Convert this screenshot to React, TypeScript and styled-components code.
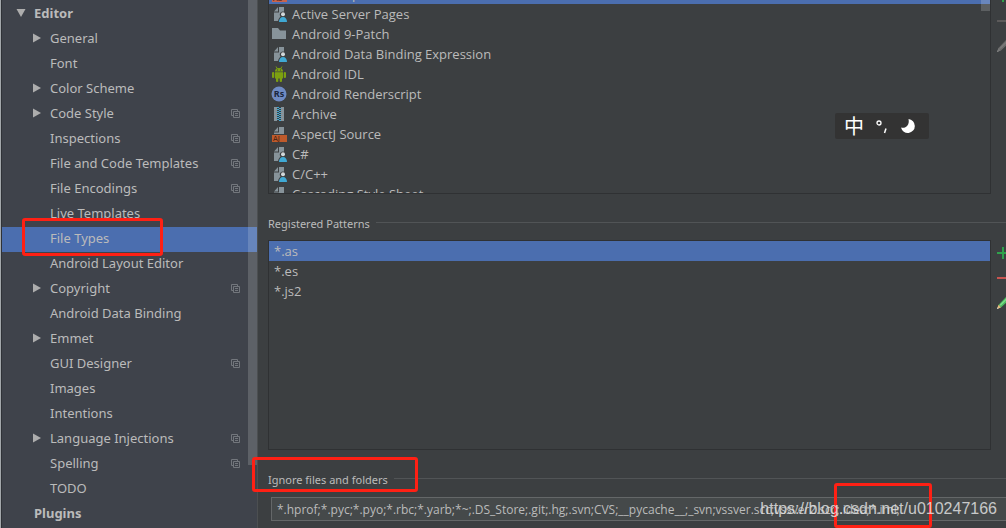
import React from "react";
import styled, { createGlobalStyle } from "styled-components";

const GlobalStyle = createGlobalStyle`
  * { box-sizing: border-box; }
  body { margin: 0; background: #3c3f41; }
  ul { list-style: none; margin: 0; padding: 0; }
  button, input { font: inherit; color: inherit; }
`;

const Window = styled.div`
  position: relative;
  display: flex;
  min-height: 100vh;
  overflow: hidden;
  background: #3c3f41;
  color: #bbbbbb;
  font-family: "Noto Sans", "Noto Sans CJK SC", sans-serif;
  font-size: 13px;
`;

const Sidebar = styled.nav`
  position: relative;
  flex: 0 0 258px;
  padding-top: 2px;
  background: #3f434b;
  border-left: 1px solid #a3a8ab;
  border-right: 1px solid #4c4f51;
  box-shadow: inset 1px 0 #2f3237;
`;

const TreeItem = styled.li`
  position: relative;
  padding-left: 1px;
`;

const TreeButton = styled.button<{ $root?: boolean; $selected?: boolean }>`
  display: flex;
  align-items: center;
  gap: 6px;
  width: 100%;
  height: 25px;
  padding: 0 17px 3px ${(p) => (p.$root ? 12 : 28)}px;
  border: 0;
  background: ${(p) => (p.$selected ? "#4b6eaf" : "transparent")};
  font-weight: ${(p) => (p.$root ? 700 : 400)};
  text-align: left;
  white-space: nowrap;
`;

const ArrowSlot = styled.span`
  display: flex;
  flex: 0 0 14px;
  justify-content: center;
`;

const TreeLabel = styled.span`
  flex: 1;
`;

const SideThumb = styled.div`
  position: absolute;
  top: 0;
  right: 0;
  width: 9px;
  height: 465px;
  background: rgba(255, 255, 255, 0.16);
`;

const Highlight = styled.div<{ $inset: string; $width: number }>`
  position: absolute;
  inset: ${(p) => p.$inset};
  z-index: 3;
  width: ${(p) => p.$width}px;
  border: 3px solid #ff2014;
  border-radius: 3px;
  pointer-events: none;
`;

const Main = styled.main`
  display: flex;
  flex: 1;
  flex-direction: column;
  min-width: 0;
  padding: 0 0 7px 10px;
`;

const Panel = styled.section<{ $grow?: boolean }>`
  display: flex;
  flex: ${(p) => (p.$grow ? "1 0 210px" : "0 0 194px")};
`;

const ListBox = styled.div<{ $cut?: boolean }>`
  position: relative;
  flex: 1;
  min-width: 0;
  height: ${(p) => (p.$cut ? "194px" : "auto")};
  overflow: hidden;
  border: 1px solid #2f3133;
  border-top-width: ${(p) => (p.$cut ? 0 : 1)}px;
  font-family: "Open Sans", sans-serif;
`;

const List = styled.ul<{ $scrolled?: boolean }>`
  margin-top: ${(p) => (p.$scrolled ? -16 : 0)}px;
`;

const ListRow = styled.li<{ $selected?: boolean; $plain?: boolean }>`
  display: flex;
  align-items: center;
  gap: 5px;
  height: 20px;
  padding-left: ${(p) => (p.$plain ? 5 : 2)}px;
  background: ${(p) => (p.$selected ? "#4b6eaf" : "transparent")};
  line-height: 20px;
  white-space: nowrap;
`;

const ListThumb = styled.div`
  position: absolute;
  top: 0;
  right: 0;
  width: 9px;
  height: 11px;
  background: rgba(255, 255, 255, 0.17);
`;

const Actions = styled.div<{ $scrolled?: boolean }>`
  flex: 0 0 15px;
  overflow: hidden;
  & > button:first-child {
    margin-top: ${(p) => (p.$scrolled ? -17 : 0)}px;
  }
`;

const ActionButton = styled.button`
  display: flex;
  align-items: center;
  height: 25px;
  padding: 0 0 0 4px;
  border: 0;
  background: transparent;
`;

const Heading = styled.div`
  position: relative;
  display: flex;
  align-items: center;
  gap: 6px;
  flex: 0 0 46px;
  padding-top: 14px;
  font-size: 11px;
  line-height: 18px;
  white-space: nowrap;
  &::after {
    content: "";
    flex: 1;
    height: 1px;
    margin-bottom: 4px;
    background: #515456;
  }
`;

const IgnoreRow = styled.div`
  position: relative;
  padding: 1px 0 0 3px;
`;

const IgnoreInput = styled.input`
  display: block;
  width: 100%;
  height: 24px;
  padding: 0 5px;
  border: 1px solid #646768;
  border-right: 0;
  background: #45494a;
  outline: 0;
  font-family: "Open Sans", sans-serif;
  font-size: 12px;
`;

const ImeBar = styled.div`
  position: absolute;
  top: 113px;
  right: 77px;
  display: flex;
  align-items: center;
  justify-content: space-between;
  width: 94px;
  height: 26px;
  padding: 0 13px 0 9px;
  border-radius: 2px;
  background: #333333;
  color: #ffffff;
  font-family: "Noto Sans CJK SC", sans-serif;
  font-size: 20px;
  line-height: 24px;
`;

const Watermark = styled.div`
  position: absolute;
  right: 9px;
  bottom: 9px;
  z-index: 4;
  color: rgba(225, 225, 225, 0.85);
  font-family: "Liberation Sans", sans-serif;
  font-size: 16px;
  line-height: 20px;
  pointer-events: none;
`;

const Arrow = ({ open }: { open?: boolean }) => (
  <svg width="10" height="10" viewBox="0 0 10 10" fill="#adadad" aria-hidden="true">
    {open ? <path d="M0.5 1h9L5 9z" /> : <path d="M1 0.5v9L9 5z" />}
  </svg>
);

const CopyIcon = () => (
  <svg width="9" height="9" viewBox="0 0 9 9" fill="none" stroke="#73777d" aria-hidden="true">
    <path d="M2 6.5H0.5v-6h6V2M2.5 2.5h6v6h-6zM4 4.5h3M4 6.5h3" />
  </svg>
);

type Kind = "banner-as" | "user" | "folder" | "android" | "rs" | "archive" | "banner-aj" | "css";

const GRAY = "#87939a";

const FileIcon = ({ kind }: { kind: Kind }) => (
  <svg width="16" height="16" viewBox="0 0 16 16" aria-hidden="true">
    {kind === "user" && (
      <>
        <path fill={GRAY} d="M3 5.5L7 1v4.500zM8 1h5v14H3V6.500h5z" />
        <path fill="#3c3f41" d="M12 5.500a3 3 0 0 1 2.500 5L16 13v3H7c0-2.500 1-4 2.500-5.500A3 3 0 0 1 12 5.500z" />
        <circle cx="12" cy="8.300" r="2" fill="#d3d8da" />
        <path fill="#40a9d4" d="M8 16c0-3 1.500-5 4-5s4 2 4 5z" />
      </>
    )}
    {kind === "folder" && <path fill={GRAY} d="M1 2h6l2 2.500h6V13H1z" />}
    {kind === "android" && (
      <g fill="#7ca010">
        <path d="M4 5.500C4 3.500 5.500 2 8 2s4 1.500 4 3.500z" />
        <path d="M5 0.500l1.500 2.500M11 0.500L9.500 3" stroke="#7ca010" />
        <path d="M4 6.200h8v6.300H4z" />
        <rect x="1" y="6" width="2.300" height="6" rx="1.100" />
        <rect x="12.700" y="6" width="2.300" height="6" rx="1.100" />
        <rect x="5" y="11" width="2.300" height="5" rx="1" />
        <rect x="8.700" y="11" width="2.300" height="5" rx="1" />
        <path fill="#3c3f41" d="M6 3.500h1v1H6zM9 3.500h1v1H9z" />
      </g>
    )}
    {kind === "rs" && (
      <>
        <circle cx="8" cy="8" r="7.500" fill="#6f8bc4" />
        <text x="8" y="11" textAnchor="middle" fontSize="9" fontWeight="700" fontFamily="Noto Sans, sans-serif" fill="#1c2740">Rs</text>
      </>
    )}
    {kind === "archive" && (
      <>
        <path fill={GRAY} d="M3 1h3v14H3zM10 1h3v14h-3z" />
        <path stroke="#40a9d4" strokeWidth="2" strokeDasharray="1 1" d="M7 1v14" />
        <path stroke="#40a9d4" strokeWidth="2" strokeDasharray="1 1" d="M9 2v13" />
      </>
    )}
    {(kind === "banner-as" || kind === "banner-aj" || kind === "css") && (
      <>
        <path fill={GRAY} d="M3 5.5L7 1v4.500zM8 1h5v7H3V6.500h5z" />
        <rect x="1" y="9" width="15" height="7" fill={kind === "banner-as" ? "#c9644d" : kind === "css" ? "#3e86a0" : "#bf5a2b"} />
        <text x="2" y="15" fontSize="7" fontFamily="DejaVu Sans, sans-serif" fill="#3a1a10">
          {kind === "banner-as" ? "AS" : kind === "css" ? "CSS" : "AJ"}
        </text>
      </>
    )}
  </svg>
);

const PlusIcon = () => (
  <svg width="16" height="16" viewBox="0 0 16 16" aria-hidden="true">
    <path d="M8 2v12M2 8h12" stroke="#2fa14b" strokeWidth="2" />
  </svg>
);

const MinusIcon = ({ disabled }: { disabled?: boolean }) => (
  <svg width="16" height="16" viewBox="0 0 16 16" aria-hidden="true">
    <path d="M2 8h12" stroke={disabled ? "#5c5a5a" : "#c75450"} strokeWidth="2" />
  </svg>
);

const PencilIcon = ({ disabled }: { disabled?: boolean }) => (
  <svg width="16" height="16" viewBox="0 0 16 16" aria-hidden="true">
    <path d="M3.500 10L11 2l3 3-8 7.500z" fill={disabled ? "#6b6b6b" : "#4fc063"} />
    <path d="M5 10.500L12.500 3" stroke={disabled ? "#858585" : "#a2eba8"} />
    <path d="M3.500 9.800L2 14l4-1.500z" fill={disabled ? "#777777" : "#e6bd7c"} />
    <path d="M2.600 12.300L2 14l1.700-.6z" fill={disabled ? "#8a8a8a" : "#d8d8d8"} />
  </svg>
);

const ActionColumn = ({ scrolled }: { scrolled?: boolean }) => (
  <Actions $scrolled={scrolled}>
    <ActionButton aria-label="Add"><PlusIcon /></ActionButton>
    <ActionButton aria-label="Remove"><MinusIcon disabled={scrolled} /></ActionButton>
    <ActionButton aria-label="Edit"><PencilIcon disabled={scrolled} /></ActionButton>
  </Actions>
);

interface Node {
  label: string;
  root?: boolean;
  arrow?: boolean;
  copy?: boolean;
  selected?: boolean;
}

const tree: Node[] = [
  { label: "Editor", root: true, arrow: true },
  { label: "General", arrow: true },
  { label: "Font" },
  { label: "Color Scheme", arrow: true },
  { label: "Code Style", arrow: true, copy: true },
  { label: "Inspections", copy: true },
  { label: "File and Code Templates", copy: true },
  { label: "File Encodings", copy: true },
  { label: "Live Templates" },
  { label: "File Types", selected: true },
  { label: "Android Layout Editor" },
  { label: "Copyright", arrow: true, copy: true },
  { label: "Android Data Binding" },
  { label: "Emmet", arrow: true },
  { label: "GUI Designer", copy: true },
  { label: "Images" },
  { label: "Intentions" },
  { label: "Language Injections", arrow: true, copy: true },
  { label: "Spelling", copy: true },
  { label: "TODO" },
  { label: "Plugins", root: true },
];

const fileTypes: { label: string; kind: Kind }[] = [
  { label: "ActionScript", kind: "banner-as" },
  { label: "Active Server Pages", kind: "user" },
  { label: "Android 9-Patch", kind: "folder" },
  { label: "Android Data Binding Expression", kind: "user" },
  { label: "Android IDL", kind: "android" },
  { label: "Android Renderscript", kind: "rs" },
  { label: "Archive", kind: "archive" },
  { label: "AspectJ Source", kind: "banner-aj" },
  { label: "C#", kind: "user" },
  { label: "C/C++", kind: "user" },
  { label: "Cascading Style Sheet", kind: "css" },
];

const patterns = ["*.as", "*.es", "*.js2"];

const ignored =
  "*.hprof;*.pyc;*.pyo;*.rbc;*.yarb;*~;.DS_Store;.git;.hg;.svn;CVS;__pycache__;_svn;vssver.scc;vssver2.scc;.idea;*.iml;";

export default function App() {
  return (
    <Window>
      <GlobalStyle />
      <Sidebar aria-label="Settings">
        <ul>
          {tree.map((n) => (
            <TreeItem key={n.label}>
              <TreeButton $root={n.root} $selected={n.selected}>
                <ArrowSlot>{n.arrow && <Arrow open={n.root} />}</ArrowSlot>
                <TreeLabel>{n.label}</TreeLabel>
                {n.copy && <CopyIcon />}
              </TreeButton>
              {n.selected && <Highlight $inset="-9px auto -4px 21px" $width={141} />}
            </TreeItem>
          ))}
        </ul>
        <SideThumb />
      </Sidebar>
      <Main>
        <Panel>
          <ListBox $cut>
            <List $scrolled>
              {fileTypes.map((f, i) => (
                <ListRow key={f.label} $selected={i === 0}>
                  <FileIcon kind={f.kind} />
                  <span>{f.label}</span>
                </ListRow>
              ))}
            </List>
            <ListThumb />
          </ListBox>
          <ActionColumn scrolled />
        </Panel>
        <Heading>Registered Patterns</Heading>
        <Panel $grow>
          <ListBox>
            <List>
              {patterns.map((p, i) => (
                <ListRow key={p} $plain $selected={i === 0}>{p}</ListRow>
              ))}
            </List>
          </ListBox>
          <ActionColumn />
        </Panel>
        <Heading>
          <label htmlFor="ignored">Ignore files and folders</label>
          <Highlight $inset="7px auto 4px -16px" $width={166} />
        </Heading>
        <IgnoreRow>
          <IgnoreInput id="ignored" defaultValue={ignored} />
          <Highlight $inset="-13px 74px -7px auto" $width={98} />
        </IgnoreRow>
      </Main>
      <ImeBar>
        <span>中</span>
        <svg width="12" height="16" viewBox="0 0 12 16" fill="none" stroke="#ffffff" aria-hidden="true">
          <circle cx="3" cy="5" r="2" strokeWidth="1.300" />
          <path d="M10 10.500l-1.500 4.500" strokeWidth="1.500" />
        </svg>
        <svg width="16" height="16" viewBox="0 0 16 16" fill="#ffffff" aria-hidden="true">
          <path d="M8.500 1A7 7 0 1 1 1 9.500c4 1.500 9-2 7.500-8.500z" />
        </svg>
      </ImeBar>
      <Watermark>https://blog.csdn.net/u010247166</Watermark>
    </Window>
  );
}
